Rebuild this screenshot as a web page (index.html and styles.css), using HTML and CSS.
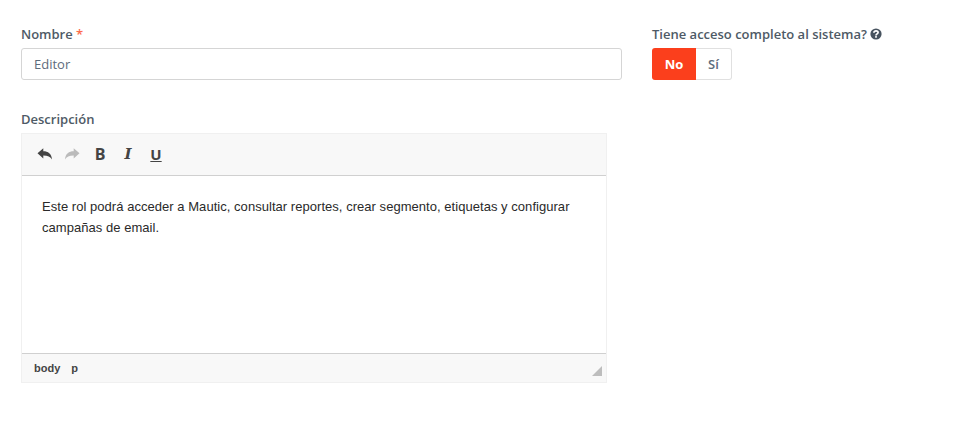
FILE: index.html
```html
<!DOCTYPE html>
<html lang="es">
<head>
<meta charset="utf-8">
<title>Editor</title>
<link rel="stylesheet" href="styles.css">
</head>
<body>
<div class="form">
  <div class="left">
    <div class="field name-field">
      <label class="label">Nombre <span class="req">*</span></label>
      <input class="input" type="text" value="Editor">
    </div>
    <div class="field">
      <label class="label">Descripción</label>
      <div class="editor">
        <div class="toolbar">
          <button class="tool"><svg width="16" height="14" viewBox="-1 0 16 14"><path fill="#444" d="M0.5 6.2 6.3 1.2V4.2C11 4.2 14.6 6.6 15 12.6 13.5 9.7 10.8 8.4 6.3 8.4V11.4Z"/></svg></button>
          <button class="tool"><svg width="16" height="14" viewBox="0 0 16 14"><path fill="#bbb" d="M15.5 6.2 9.7 1.2V4.2C5 4.2 1.4 6.6 1 12.6 2.5 9.7 5.2 8.4 9.7 8.4V11.4Z"/></svg></button>
          <button class="tool tool-b">B</button>
          <button class="tool tool-i">I</button>
          <button class="tool tool-u">U</button>
        </div>
        <div class="content"><p>Este rol podrá acceder a Mautic, consultar reportes, crear segmento, etiquetas y configurar campañas de email.</p></div>
        <div class="status">
          <span class="crumb">body</span><span class="crumb">p</span>
          <span class="grip"></span>
        </div>
      </div>
    </div>
  </div>
  <div class="right">
    <label class="label">Tiene acceso completo al sistema? <svg class="help" width="12" height="12" viewBox="0 0 12 12"><circle cx="6" cy="6" r="5.6" fill="#47535f"/><path fill="none" stroke="#fff" stroke-width="1.7" d="M3.9 4.7C3.9 3.5 4.8 2.9 6 2.9S8.1 3.6 8.1 4.6C8.1 5.9 6 5.9 6 7.4"/><rect x="5.1" y="8.1" width="1.8" height="1.6" fill="#fff"/></svg></label>
    <div class="toggle"><span class="opt opt-on">No</span><span class="opt opt-off">Sí</span></div>
  </div>
</div>
</body>
</html>
```
FILE: styles.css
```css
* { box-sizing: border-box; }
html, body { margin: 0; background: #fff; }
body { font-family: "Open Sans", sans-serif; font-size: 13px; color: #4e5d6c; height: 422px; overflow: hidden; }
.form { display: flex; padding: 25px 0 0 21px; gap: 30px; }
.left { width: 601px; }
.right { width: 300px; }
.field { display: block; }
.name-field { margin-bottom: 30px; }
.label { display: block; font-weight: 600; font-size: 13px; line-height: 18px; color: #4e5a66; margin-bottom: 5px; }
.req { color: #fd6b4b; }
.input { display: block; width: 100%; height: 32px; border: 1px solid #d5d5d5; border-radius: 3px; padding: 0 12px; font: 13px "Open Sans", sans-serif; color: #5d6c7c; background: #fff; outline: none; }
.editor { width: 586px; border: 1px solid #f0f0f0; }
.toolbar { display: flex; align-items: center; height: 42px; background: #f8f8f8; border-bottom: 1px solid #d0d0d0; padding: 0 0 2px 8px; }
.tool { width: 28px; height: 28px; padding: 0; margin: 0; border: 0; background: none; display: flex; align-items: center; justify-content: center; font: 700 16px "Open Sans", sans-serif; color: #444; }
.tool-i { font: italic 700 15px "DejaVu Serif", serif; }
.tool-u { font-size: 15px; text-decoration: underline; }
.content { height: 177px; padding: 20px 20px; background: #fff; }
.content p { margin: 0; font: 13px/21px "Liberation Sans", sans-serif; color: #2a2a2a; letter-spacing: 0.04px; }
.status { position: relative; display: flex; align-items: center; height: 29px; background: #f8f8f8; border-top: 1px solid #d0d0d0; padding-left: 12px; font: 700 11px "Liberation Sans", sans-serif; color: #444; }
.crumb { margin-right: 11px; }
.grip { position: absolute; right: 4px; bottom: 6px; width: 10px; height: 10px; background: #bdbdbd; clip-path: polygon(100% 0, 100% 100%, 0 100%); }
.right .label { white-space: nowrap; }
.help { vertical-align: -1px; }
.toggle { display: flex; width: 80px; height: 32px; }
.opt { display: flex; align-items: center; justify-content: center; font-weight: 700; font-size: 13px; }
.opt-on { width: 44px; background: #fb3f1c; color: #fff; border-radius: 3px 0 0 3px; }
.opt-off { width: 36px; border: 1px solid #e0e0e0; border-left: 0; border-radius: 0 3px 3px 0; color: #5d6c7c; font-weight: 600; }
```
